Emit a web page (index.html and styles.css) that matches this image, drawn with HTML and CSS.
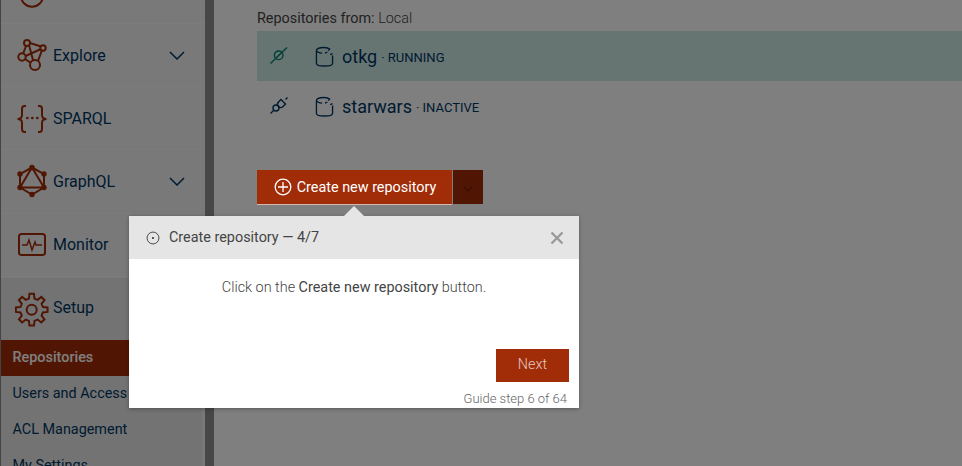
FILE: index.html
```html
<!DOCTYPE html>
<html lang="en">
<head>
  <meta charset="UTF-8" />
  <title>Repositories</title>
  <link rel="stylesheet" href="styles.css">
</head>
<body>
  <div class="app">
    <aside class="sidebar">
      <div class="nav-item">
        <svg class="nav-icon" viewBox="0 0 36 36"><circle cx="17" cy="21.75" r="11"/></svg>
        <span class="nav-label">Import</span>
      </div>
      <div class="nav-item">
        <svg class="nav-icon" viewBox="0 0 36 36">
          <path d="M11 9 8 17M14 8l4 15M15 6l11 3.5M10.5 19 26 12M10 22l6 4M27 13l-4 11"/>
          <circle cx="12" cy="6" r="3"/><circle cx="28" cy="11" r="2.7"/><circle cx="7" cy="20" r="3.7"/><circle cx="20" cy="28" r="5"/>
        </svg>
        <span class="nav-label">Explore</span>
        <svg class="chevron" viewBox="0 0 16 9"><path d="M1 1l7 7 7-7"/></svg>
      </div>
      <div class="nav-item">
        <svg class="nav-icon" viewBox="0 0 36 36">
          <path d="M11 6H9.5Q7 6 7 9v6q0 4-4.5 4Q7 19 7 23v6q0 3 2.5 3H11M23 6h1.5Q27 6 27 9v6q0 4 4.5 4Q27 19 27 23v6q0 3-2.5 3H23"/>
          <path class="dots" d="M12.3 18h.1M17.3 18h.1M22.3 18h.1"/>
        </svg>
        <span class="nav-label">SPARQL</span>
      </div>
      <div class="nav-item">
        <svg class="nav-icon" viewBox="0 0 36 36">
          <path d="M17 4.5 29 11v13.5L17 31.5 5 24.5V11zM17 4.5 29 24.5H5z"/>
          <g class="nodes"><circle cx="17" cy="4.5" r="2.7"/><circle cx="29" cy="11" r="2.7"/><circle cx="29" cy="24.5" r="2.7"/><circle cx="17" cy="31.5" r="2.7"/><circle cx="5" cy="24.5" r="2.7"/><circle cx="5" cy="11" r="2.7"/></g>
        </svg>
        <span class="nav-label">GraphQL</span>
        <svg class="chevron" viewBox="0 0 16 9"><path d="M1 1l7 7 7-7"/></svg>
      </div>
      <div class="nav-item">
        <svg class="nav-icon" viewBox="0 0 36 36">
          <rect x="4" y="7" width="26" height="21" rx="2.5"/>
          <path class="pulse" d="M7 18h5l2-5 3 10 3-8 1 3h6"/>
        </svg>
        <span class="nav-label">Monitor</span>
      </div>
      <div class="nav-item nav-open">
        <svg class="nav-icon" viewBox="0 0 36 36">
          <g transform="translate(16.7 18.7)">
            <circle r="5"/>
            <path d="M11.16-2.78 15.84-2.23 15.84 2.23 11.16 2.78 9.86 5.92 12.78 9.63 9.63 12.78 5.92 9.86 2.78 11.16 2.23 15.84-2.23 15.84-2.78 11.16-5.92 9.86-9.63 12.78-12.78 9.63-9.86 5.92-11.16 2.78-15.84 2.23-15.84-2.23-11.16-2.78-9.86-5.92-12.78-9.63-9.63-12.78-5.92-9.86-2.78-11.16-2.23-15.84 2.23-15.84 2.78-11.16 5.92-9.86 9.63-12.78 12.78-9.63 9.86-5.92z"/>
          </g>
        </svg>
        <span class="nav-label">Setup</span>
      </div>
      <ul class="subnav">
        <li class="active">Repositories</li>
        <li>Users and Access</li>
        <li>ACL Management</li>
        <li>My Settings</li>
      </ul>
    </aside>

    <main class="content">
      <div class="repos-from">Repositories from: <span class="light">Local</span></div>
      <div class="repo running">
        <svg class="plug" viewBox="0 0 18 18"><path d="M.5 16.5 17 .5M5.5 11.5l6-6"/><circle cx="8.7" cy="8.3" r="4.3"/></svg>
        <svg class="db" viewBox="0 0 20 22"><path d="M1.5 5v13q0 3 8.5 3t8.5-3V10M1.5 5q0-3.5 8-3.5 4 0 6.5 2M1.5 5q1 2 6 2.5M10.5 7.5l2.5-1M14 5l1-2M16 9l2.5-1"/></svg>
        <span class="repo-name">otkg</span>
        <span class="repo-state">· RUNNING</span>
      </div>
      <div class="repo">
        <svg class="plug" viewBox="0 0 18 18"><path d="M.5 16.5l3-3M15.5 2.5l2-2"/><circle cx="6" cy="11" r="3"/><path d="M11 2.5 15.5 7 13 9.5A3 3 0 0 1 8.5 5z"/></svg>
        <svg class="db" viewBox="0 0 20 22"><path d="M1.5 5v13q0 3 8.5 3t8.5-3V10M1.5 5q0-3.5 8-3.5 4 0 6.5 2M1.5 5q1 2 6 2.5M10.5 7.5l2.5-1M14 5l1-2M16 9l2.5-1"/></svg>
        <span class="repo-name">starwars</span>
        <span class="repo-state">· INACTIVE</span>
      </div>
      <div class="create-row">
        <button class="create-btn">
          <svg class="plus" viewBox="0 0 18 18"><circle cx="9" cy="9" r="7.8"/><path d="M9 4v10M4 9h10"/></svg>
          Create new repository
        </button>
        <button class="create-more"><svg viewBox="0 0 10 6"><path d="M1 1l4 4 4-4"/></svg></button>
      </div>
    </main>
  </div>

  <div class="overlay"></div>

  <section class="guide">
    <span class="guide-arrow"></span>
    <header class="guide-head">
      <svg class="guide-target" viewBox="0 0 16 16"><circle cx="8" cy="8" r="6.8"/><circle class="dot" cx="8" cy="8" r="1.2"/></svg>
      <span class="guide-title">Create repository — 4/7</span>
      <svg class="guide-close" viewBox="0 0 14 14"><path d="M1.5 1.5l11 11M12.5 1.5l-11 11"/></svg>
    </header>
    <div class="guide-body">
      <p>Click on the <b>Create new repository</b> button.</p>
      <div class="guide-actions"><button class="next">Next</button></div>
      <div class="guide-step">Guide step 6 of 64</div>
    </div>
  </section>
</body>
</html>
```
FILE: styles.css
```css
* {
  box-sizing: border-box;
}

html, body {
  margin: 0;
  height: 466px;
  overflow: hidden;
}

body {
  font-family: Roboto, sans-serif;
  background: #fff;
  color: #003663;
}

.app {
  display: flex;
  height: 466px;
  overflow: hidden;
}

.sidebar {
  width: 214px;
  flex: none;
  background: #f3f3f3;
  border-left: 1px solid #888;
  border-right: 9px solid #8e8e8e;
  margin-top: -39.225px;
}

.nav-item {
  height: 63.2px;
  display: flex;
  align-items: center;
  padding-left: 14px;
  border-bottom: 1px solid #f8f8f8;
  position: relative;
}

.nav-icon {
  width: 36px;
  height: 36px;
  flex: none;
  fill: none;
  stroke: #a32c06;
  stroke-width: 2;
}

.nav-icon .dots {
  stroke-width: 2.6;
  stroke-linecap: round;
}

.nav-icon .pulse {
  stroke-width: 1.5;
}

.nav-icon .nodes circle {
  fill: #a32c06;
  stroke: none;
}

.nav-label {
  margin-left: 2px;
  font-size: 16px;
  color: #003663;
}

.chevron {
  position: absolute;
  left: 168px;
  top: 27px;
  width: 16px;
  height: 9px;
  fill: none;
  stroke: #003663;
  stroke-width: 1.5;
}

.nav-open {
  height: 62.2px;
  margin-top: 1px;
  background: #e6e6e6;
  border-bottom: none;
}

.nav-open .nav-label {
  margin-bottom: 3px;
}

.subnav {
  list-style: none;
  margin: 0 3px 0 0;
  padding: 0;
  background: #e6e6e6;
  font-size: 14.4px;
}

.subnav li {
  height: 36px;
  line-height: 36px;
  padding-left: 11.5px;
}

.subnav .active {
  background: #a32c06;
  color: #fff;
  font-weight: 500;
}

.content {
  flex: 1;
  padding: 10px 0 0 43px;
  background: #fff;
}

.repos-from {
  font-size: 14.4px;
  line-height: 18px;
  color: #444;
  margin-bottom: 3px;
}

.light {
  font-weight: 300;
}

.repo {
  height: 50px;
  display: flex;
  align-items: center;
  padding-left: 13px;
}

.repo.running {
  background: #cce9e5;
}

.plug {
  width: 18px;
  height: 18px;
  flex: none;
  fill: none;
  stroke: #003663;
  stroke-width: 1.4;
}

.running .plug {
  stroke: #02806a;
}

.db {
  width: 19px;
  height: 21px;
  margin-left: 27px;
  flex: none;
  fill: none;
  stroke: #003663;
  stroke-width: 1.4;
}

.repo-name {
  margin-left: 8px;
  font-size: 18px;
  color: #003663;
}

.repo-state {
  margin-left: 4px;
  margin-top: 3px;
  font-size: 13px;
  color: #003663;
}

.create-row {
  display: flex;
  margin-top: 39px;
}

.create-btn {
  width: 195px;
  height: 35px;
  background: #a02c08;
  color: #fff;
  border: none;
  border-bottom: 1px solid #d8b8ac;
  font-family: inherit;
  font-size: 14.4px;
  display: flex;
  align-items: center;
  justify-content: center;
  gap: 5px;
  padding: 0 0 0 1px;
  position: relative;
  z-index: 2;
}

.plus {
  width: 18px;
  height: 18px;
  fill: none;
  stroke: #fff;
  stroke-width: 1.3;
}

.create-more {
  width: 30px;
  height: 34px;
  margin-left: 1px;
  background: #a32c06;
  border: none;
  padding: 0;
}

.create-more svg {
  width: 10px;
  height: 6px;
  fill: none;
  stroke: #741e04;
  stroke-width: 1.3;
}

.overlay {
  position: absolute;
  inset: 0;
  z-index: 1;
  background: rgba(0, 0, 0, 0.5);
}

.guide {
  position: absolute;
  z-index: 3;
  left: 129px;
  top: 216px;
  width: 450px;
  height: 192px;
  background: #fff;
  box-shadow: 0 1px 4px rgba(0, 0, 0, 0.3);
}

.guide-arrow {
  position: absolute;
  left: 215px;
  top: -10px;
  border-left: 10px solid transparent;
  border-right: 10px solid transparent;
  border-bottom: 10px solid #e5e5e5;
}

.guide-head {
  height: 43px;
  background: #e5e5e5;
  display: flex;
  align-items: center;
  padding: 0 15px 0 17px;
  font-size: 14.4px;
  color: #444;
}

.guide-target {
  width: 14px;
  height: 14px;
  fill: none;
  stroke: #333;
  stroke-width: 1;
  margin-top: 1px;
}

.guide-target .dot {
  fill: #333;
  stroke: none;
}

.guide-title {
  margin-left: 9px;
  flex: 1;
}

.guide-close {
  width: 14px;
  height: 14px;
  fill: none;
  stroke: #999;
  stroke-width: 2.4;
}

.guide-body {
  position: relative;
  height: 149px;
}

.guide-body p {
  margin: 0;
  padding-top: 21px;
  font-size: 14.4px;
  line-height: 16px;
  font-weight: 300;
  text-align: center;
  color: #444;
}

.guide-body b {
  font-weight: 400;
}

.guide-actions {
  position: absolute;
  right: 10px;
  top: 90px;
}

.next {
  width: 73px;
  height: 33px;
  padding: 0 0 2px;
  background: #a02c08;
  color: rgba(255, 255, 255, 0.75);
  border: none;
  font-family: inherit;
  font-size: 14.4px;
  font-weight: 300;
}

.guide-step {
  position: absolute;
  right: 12px;
  bottom: 2px;
  font-size: 13px;
  font-weight: 300;
  color: #666;
}
```
